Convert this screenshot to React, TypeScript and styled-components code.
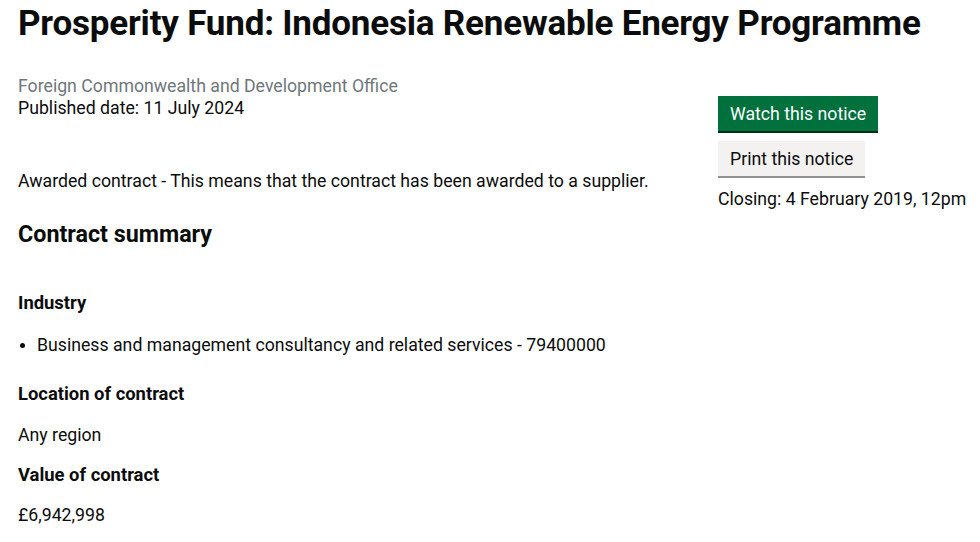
import styled, { createGlobalStyle } from "styled-components";

const GlobalStyle = createGlobalStyle`
  * {
    box-sizing: border-box;
  }

  body {
    margin: 0;
    background: #ffffff;
    color: #0b0c0c;
    font-family: Roboto, "Noto Sans", Arial, sans-serif;
  }
`;

const Page = styled.main`
  padding: 4px 18px 0 18px;
`;

const Title = styled.h1`
  margin: 0 0 31px 0;
  font-size: 35px;
  line-height: 40px;
  font-weight: 700;
  letter-spacing: -0.2px;
  white-space: nowrap;
`;

const Row = styled.div`
  display: grid;
  grid-template-columns: 700px 1fr;
`;

const Column = styled.div`
  display: flex;
  flex-direction: column;
`;

const Text = styled.p<{ $muted?: boolean; $gap?: number }>`
  margin: ${(p) => p.$gap ?? 0}px 0 0 0;
  font-size: 17.7px;
  line-height: 22px;
  color: ${(p) => (p.$muted ? "#6f777b" : "#0b0c0c")};
`;

const SectionTitle = styled.h2`
  margin: 28px 0 0 0;
  font-size: 23.3px;
  line-height: 28px;
  font-weight: 700;
`;

const Label = styled.h3<{ $gap: number }>`
  margin: ${(p) => p.$gap}px 0 0 0;
  font-size: 18.4px;
  line-height: 22px;
  font-weight: 700;
`;

const List = styled.ul`
  margin: 20px 0 0 0;
  padding: 0;
  list-style: none;
`;

const Item = styled.li`
  display: flex;
  align-items: center;
  font-size: 17.7px;
  line-height: 22px;

  &::before {
    content: "";
    width: 5px;
    height: 5px;
    border-radius: 50%;
    background: #0b0c0c;
    margin: 0 12px 0 2px;
  }
`;

const Actions = styled.div`
  display: flex;
  flex-direction: column;
  align-items: flex-start;
  padding-top: 21px;
`;

const Button = styled.button<{ $variant: "primary" | "secondary" }>`
  height: 35px;
  padding: 0 12px;
  margin: 0 0 10px 0;
  border: 0;
  border-radius: 0;
  font-family: inherit;
  font-size: 17.7px;
  line-height: 22px;
  cursor: pointer;
  background: ${(p) => (p.$variant === "primary" ? "#00703c" : "#f3f2f1")};
  color: ${(p) => (p.$variant === "primary" ? "#ffffff" : "#0b0c0c")};
  box-shadow: 0 2px 0 ${(p) => (p.$variant === "primary" ? "#002d18" : "#929191")};
`;

const Closing = styled.p`
  margin: 2px 0 0 0;
  font-size: 17.7px;
  line-height: 22px;
  white-space: nowrap;
`;

export default function App() {
  return (
    <>
      <GlobalStyle />
      <Page>
        <Title>Prosperity Fund: Indonesia Renewable Energy Programme</Title>
        <Row>
          <Column>
            <Text $muted>Foreign Commonwealth and Development Office</Text>
            <Text>Published date: 11 July 2024</Text>
            <Text $gap={51}>
              Awarded contract - This means that the contract has been awarded to a supplier.
            </Text>
            <SectionTitle>Contract summary</SectionTitle>
            <Label $gap={44}>Industry</Label>
            <List>
              <Item>Business and management consultancy and related services - 79400000</Item>
            </List>
            <Label $gap={27}>Location of contract</Label>
            <Text $gap={19}>Any region</Text>
            <Label $gap={18}>Value of contract</Label>
            <Text $gap={18}>£6,942,998</Text>
          </Column>
          <Actions>
            <Button $variant="primary">Watch this notice</Button>
            <Button $variant="secondary">Print this notice</Button>
            <Closing>Closing: 4 February 2019, 12pm</Closing>
          </Actions>
        </Row>
      </Page>
    </>
  );
}
